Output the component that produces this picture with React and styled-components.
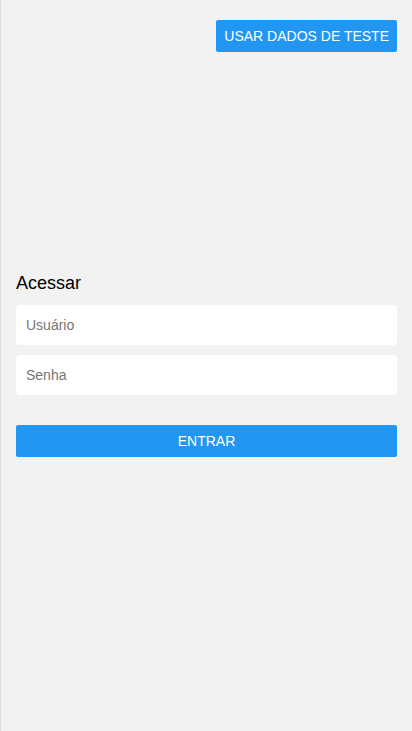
import styled, { createGlobalStyle } from "styled-components";

const GlobalStyle = createGlobalStyle`
  html, body {
    margin: 0;
    padding: 0;
    background: #f2f2f2;
  }
  * {
    box-sizing: border-box;
  }
`;

const Page = styled.div`
  min-height: 731px;
  background: #f2f2f2;
  border-left: 1px solid #dcdcdc;
  padding: 20px 15px;
  font-family: "Liberation Sans", Arial, sans-serif;
  display: flex;
  flex-direction: column;
`;

const TopBar = styled.div`
  display: flex;
  justify-content: flex-end;
`;

const Button = styled.button`
  height: 32px;
  padding: 0 8px;
  width: ${(p) => (p.$full ? "100%" : "auto")};
  background: #2196f3;
  color: #fff;
  border: none;
  border-radius: 2px;
  font-family: inherit;
  font-size: 14px;
  text-transform: uppercase;
  cursor: pointer;
`;

const Form = styled.form`
  margin-top: 221px;
  display: flex;
  flex-direction: column;
`;

const Title = styled.h2`
  margin: 0 0 11px;
  font-size: 18px;
  line-height: 21px;
  font-weight: normal;
  color: #000;
`;

const Input = styled.input`
  height: 40px;
  margin-bottom: 10px;
  padding: 0 10px;
  border: none;
  border-radius: 4px;
  background: #fff;
  font-family: inherit;
  font-size: 14px;
  color: #333;
  outline: none;

  &::placeholder {
    color: #757575;
  }
`;

const Submit = styled.div`
  margin-top: 20px;
`;

export default function App() {
  return (
    <>
      <GlobalStyle />
      <Page>
        <TopBar>
          <Button type="button">Usar dados de teste</Button>
        </TopBar>
        <Form onSubmit={(e) => e.preventDefault()}>
          <Title>Acessar</Title>
          <Input placeholder="Usuário" />
          <Input type="password" placeholder="Senha" />
          <Submit>
            <Button $full type="submit">Entrar</Button>
          </Submit>
        </Form>
      </Page>
    </>
  );
}
